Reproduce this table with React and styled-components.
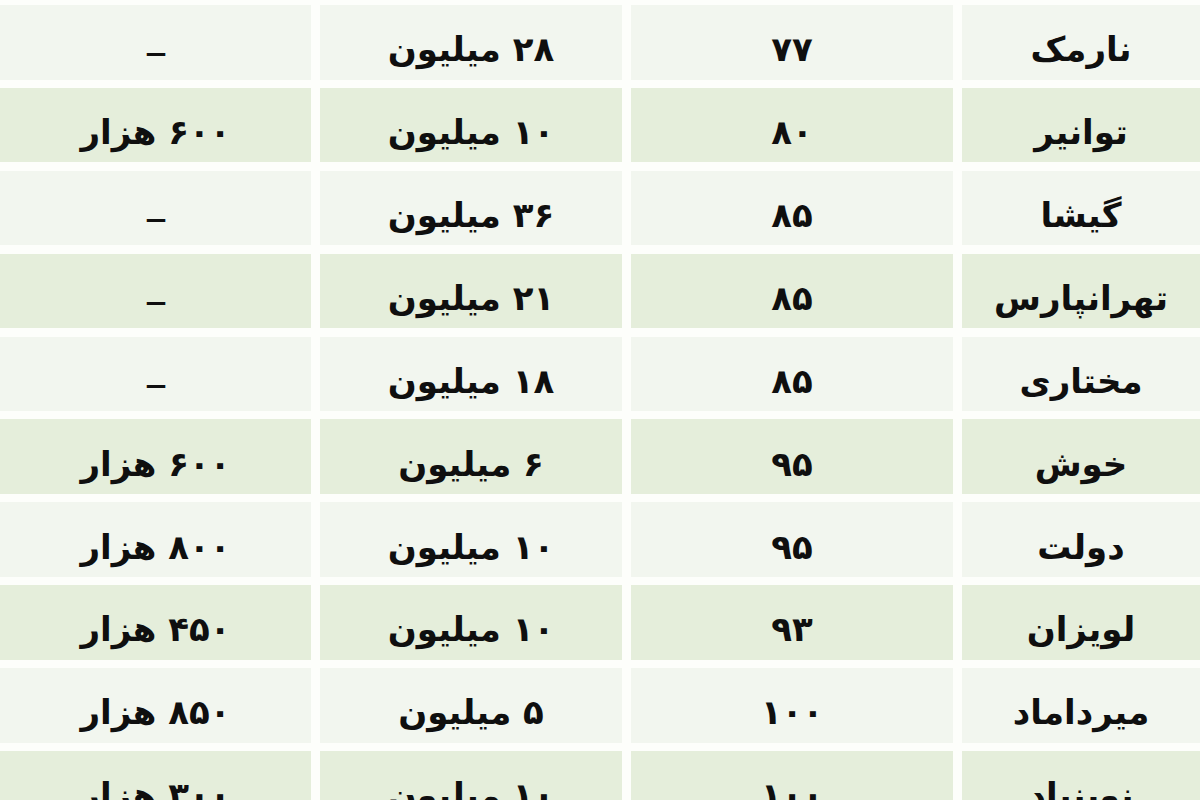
import React from "react";
import styled, { createGlobalStyle } from "styled-components";

const Global = createGlobalStyle`
  html, body { margin: 0; padding: 0; background: #fdfefb; overflow: hidden; }
  body { width: 1200px; height: 800px; }
`;

const Table = styled.div`
  direction: rtl;
  display: grid;
  grid-template-columns: 238px 322px 302px 311px;
  column-gap: 9px;
  row-gap: 8.4px;
  grid-auto-rows: 74.5px;
  padding-top: 5px;
  width: 1200px;
  height: 800px;
  overflow: hidden;
  font-family: "DejaVu Sans", "Noto Sans", sans-serif;
  font-weight: 700;
  color: #0f0f0f;
`;

const Cell = styled.div`
  display: flex;
  align-items: center;
  justify-content: center;
  background: ${(p) => (p.$green ? "#e5eedb" : "#f2f6ef")};
  font-size: 34px;
  line-height: 1;
  padding-top: 14px;
  white-space: nowrap;
`;

const Dash = styled.span`
  display: inline-block;
  font-size: 40px;
  font-weight: 400;
  transform: translateY(3px) scaleX(1.15);
`;

const rows = [
  ["نارمک", "۷۷", "۲۸ میلیون", null],
  ["توانیر", "۸۰", "۱۰ میلیون", "۶۰۰ هزار"],
  ["گیشا", "۸۵", "۳۶ میلیون", null],
  ["تهرانپارس", "۸۵", "۲۱ میلیون", null],
  ["مختاری", "۸۵", "۱۸ میلیون", null],
  ["خوش", "۹۵", "۶ میلیون", "۶۰۰ هزار"],
  ["دولت", "۹۵", "۱۰ میلیون", "۸۰۰ هزار"],
  ["لویزان", "۹۳", "۱۰ میلیون", "۴۵۰ هزار"],
  ["میرداماد", "۱۰۰", "۵ میلیون", "۸۵۰ هزار"],
  ["نوبنیاد", "۱۰۰", "۱۰ میلیون", "۳۰۰ هزار"],
];

export default function App() {
  return (
    <>
      <Global />
      <Table>
        {rows.map((r, i) =>
          r.map((c, j) => (
            <Cell key={`${i}-${j}`} $green={i % 2 === 1}>
              {c === null ? <Dash>–</Dash> : c}
            </Cell>
          ))
        )}
      </Table>
    </>
  );
}
